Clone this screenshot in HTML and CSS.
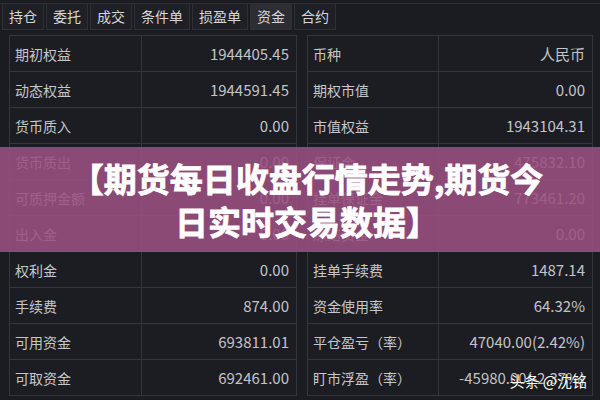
FILE: index.html
```html
<!DOCTYPE html>
<html lang="zh-CN">
<head>
<meta charset="utf-8">
<link rel="stylesheet" href="styles.css">
</head>
<body>
<div class="page">
  <div class="tabbar">
    <div class="tab">持仓</div>
    <div class="tab">委托</div>
    <div class="tab">成交</div>
    <div class="tab">条件单</div>
    <div class="tab">损盈单</div>
    <div class="tab active">资金</div>
    <div class="tab">合约</div>
  </div>
  <div class="tables">
    <table class="grid left">
      <tr><td class="lbl">期初权益</td><td class="val">1944405.45</td></tr>
      <tr><td class="lbl">动态权益</td><td class="val">1944591.45</td></tr>
      <tr><td class="lbl">货币质入</td><td class="val">0.00</td></tr>
      <tr><td class="lbl">货币质出</td><td class="val">0.00</td></tr>
      <tr><td class="lbl">可质押金额</td><td class="val">0.00</td></tr>
      <tr><td class="lbl">出入金</td><td class="val">0.00</td></tr>
      <tr><td class="lbl">权利金</td><td class="val">0.00</td></tr>
      <tr><td class="lbl">手续费</td><td class="val">874.00</td></tr>
      <tr><td class="lbl">可用资金</td><td class="val">693811.01</td></tr>
      <tr><td class="lbl">可取资金</td><td class="val">692461.00</td></tr>
    </table>
    <table class="grid right">
      <tr><td class="lbl">币种</td><td class="val">人民币</td></tr>
      <tr><td class="lbl">期权市值</td><td class="val">0.00</td></tr>
      <tr><td class="lbl">市值权益</td><td class="val">1943104.31</td></tr>
      <tr><td class="lbl">保证金</td><td class="val">475832.10</td></tr>
      <tr><td class="lbl">挂单保证金</td><td class="val">773461.20</td></tr>
      <tr><td class="lbl">冻结资金</td><td class="val">0.00</td></tr>
      <tr><td class="lbl">挂单手续费</td><td class="val">1487.14</td></tr>
      <tr><td class="lbl">资金使用率</td><td class="val">64.32%</td></tr>
      <tr><td class="lbl">平仓盈亏（率）</td><td class="val">47040.00(2.42%)</td></tr>
      <tr><td class="lbl">盯市浮盈（率）</td><td class="val">-45980.00(-2.37%)</td></tr>
    </table>
  </div>
  <div class="banner">
    <div class="banner-text">【期货每日收盘行情走势,期货今日实时交易数据】</div>
  </div>
  <div class="watermark">头条 @沈铭</div>
</div>
</body>
</html>
```

FILE: styles.css
```css
html, body {
  margin: 0;
  padding: 0;
}
body {
  background: #1b1c21;
  font-family: "Noto Sans CJK SC", "Noto Sans", sans-serif;
  color: #c9cacd;
}
.page {
  position: relative;
  width: 600px;
  height: 400px;
  overflow: hidden;
}
.tabbar {
  margin-top: 3px;
  border-top: 1px solid #303136;
  display: flex;
  gap: 2px;
  padding-left: 2px;
  height: 26px;
}
.tab {
  background: #1f2026;
  border: 1px solid #2f3035;
  border-top: none;
  padding: 0 6px;
  font-size: 14px;
  line-height: 25px;
  color: #d6d6d8;
}
.tab.active {
  background: #2d2e33;
}
.tables {
  display: flex;
  gap: 10px;
  padding: 5px 0 0 9px;
}
.grid {
  border-collapse: collapse;
  background: #1c1d22;
}
.grid.left {
  width: 288px;
}
.grid.right {
  width: 286px;
}
.grid td {
  border: 1px solid #35363b;
  height: 35px;
  padding: 0;
  font-size: 14px;
  white-space: nowrap;
}
.grid .lbl {
  padding-left: 5px;
  color: #c6c7ca;
}
.grid.left .lbl {
  width: 126px;
}
.grid.right .lbl {
  width: 125px;
}
.grid .val {
  text-align: right;
  padding-right: 7px;
  font-size: 15px;
  color: #c3c4c7;
}
.banner {
  position: absolute;
  top: 147px;
  left: 0;
  width: 600px;
  height: 105px;
  background: rgba(155, 80, 129, 0.88);
  display: flex;
  align-items: center;
  justify-content: center;
}
.banner-text {
  width: 490px;
  text-align: center;
  color: #ffffff;
  font-weight: 700;
  font-size: 33px;
  line-height: 43px;
  padding-left: 14px;
  -webkit-text-stroke: 0.8px #ffffff;
}
.watermark {
  position: absolute;
  right: 13px;
  bottom: 9px;
  font-size: 15px;
  color: #ffffff;
  text-shadow: 0 0 2px rgba(0, 0, 0, 0.6);
}
```
